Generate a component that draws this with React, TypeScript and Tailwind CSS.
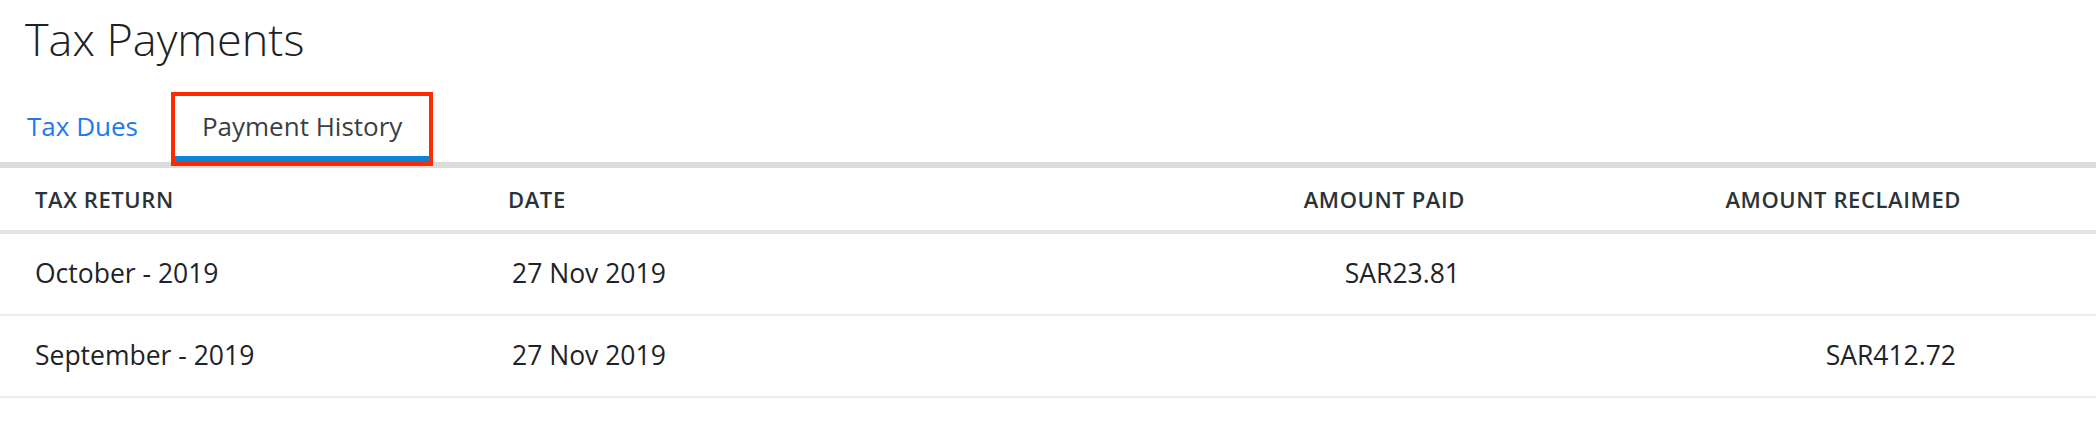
import { useState } from 'react'

const rows = [
  { period: 'October - 2019', date: '27 Nov 2019', paid: 'SAR23.81', reclaimed: '' },
  { period: 'September - 2019', date: '27 Nov 2019', paid: '', reclaimed: 'SAR412.72' },
]

export default function App() {
  const [tab, setTab] = useState('history')

  return (
    <div className="w-[2096px] h-[446px] bg-white font-['Open_Sans',_'Noto_Sans',_sans-serif] text-[#212529]">
      {/* Page title */}
      <div className="h-[92px] pl-[25px] pt-[15px]">
        <h1 className="text-[45px] leading-[48px] font-light text-[#1d2125]">Tax Payments</h1>
      </div>

      {/* Tabs */}
      <div className="flex h-[70px] pl-[27px] gap-[37px]">
        <button
          onClick={() => setTab('dues')}
          className={`h-full pt-[4px] text-[26px] ${tab === 'dues' ? 'border-b-[6px] border-[#0a83d8] text-[#3a3f45]' : 'border-b-[6px] border-transparent text-[#1a7bf0]'}`}
        >
          Tax Dues
        </button>
        <button
          onClick={() => setTab('history')}
          className={`relative h-full px-[27px] pt-[4px] text-[26px] ${tab === 'history' ? 'border-b-[6px] border-[#0a83d8] text-[#3a3f45]' : 'border-b-[6px] border-transparent text-[#1a7bf0]'}`}
        >
          Payment History
          {/* highlight annotation */}
          <span className="absolute -left-[4px] -right-[4px] top-0 -bottom-[10px] border-[4px] border-[#ff2a00] pointer-events-none" />
        </button>
      </div>
      <div className="h-[6px] bg-[#dcdcdc]" />

      {/* Table */}
      <div className="grid grid-cols-[508px_480px_477px_496px] h-[66px] items-center border-b-[4px] border-[#e4e4e4] text-[22px] tracking-[0.6px] font-semibold text-[#2b3338]">
        <div className="pl-[35px]">TAX RETURN</div>
        <div>DATE</div>
        <div className="text-right">AMOUNT PAID</div>
        <div className="text-right">AMOUNT RECLAIMED</div>
      </div>
      {rows.map((row) => (
        <div
          key={row.period}
          className="grid grid-cols-[508px_480px_477px_496px] h-[82px] items-center border-b-2 border-[#ececec] text-[26.5px] text-[#1f2327]"
        >
          <div className="pl-[35px]">{row.period}</div>
          <div className="pl-[4px]">{row.date}</div>
          <div className="text-right pr-[5px]">{row.paid}</div>
          <div className="text-right pr-[5px]">{row.reclaimed}</div>
        </div>
      ))}
    </div>
  )
}
